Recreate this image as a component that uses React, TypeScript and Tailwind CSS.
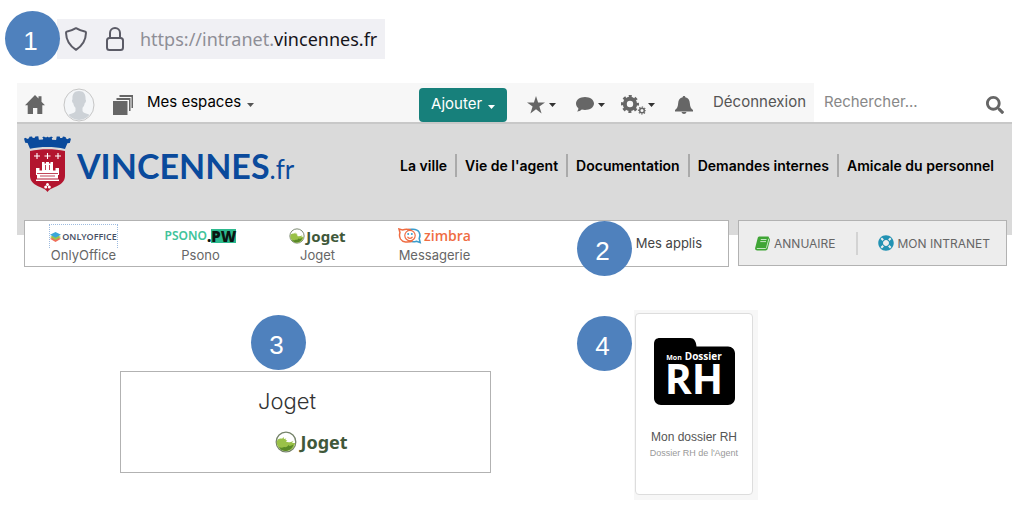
import React from "react";
import { FaSearch, FaLifeRing } from "react-icons/fa";

const navItems = ["La ville", "Vie de l'agent", "Documentation", "Demandes internes", "Amicale du personnel"];

function Step({ n, className = "" }: { n: number; className?: string }) {
  return (
    <span
      className={`flex size-[55px] shrink-0 items-center justify-center rounded-full bg-[#4f81bd] pr-1 pt-1 font-['Liberation_Sans',sans-serif] text-[26px] leading-none text-white ${className}`}
    >
      {n}
    </span>
  );
}

function Caret({ className = "" }: { className?: string }) {
  return (
    <svg width="7" height="4" viewBox="0 0 7 4" fill="currentColor" className={className} aria-hidden="true">
      <path d="M0 0h7L3.500 4z" />
    </svg>
  );
}

function ShieldIcon() {
  return (
    <svg width="22" height="24" viewBox="0 0 22 24" fill="none" stroke="#5b5b66" strokeWidth="2" strokeLinejoin="round" aria-hidden="true">
      <path d="M11 1.200C8 3 5 4 2.200 4.400 1.400 4.600 1 5 1 5.800c.2 8 3.600 13 10 17 6.400-4 9.800-9 10-17 0-.8-.4-1.200-1.200-1.400C17 4 14 3 11 1.200z" />
    </svg>
  );
}

function LockIcon() {
  return (
    <svg width="18" height="24" viewBox="0 0 18 24" fill="none" stroke="#5b5b66" strokeWidth="2" strokeLinejoin="round" aria-hidden="true">
      <rect x="1" y="11" width="16" height="12" rx="2.500" />
      <path d="M4 11V6a5 5 0 0 1 10 0v5" />
    </svg>
  );
}

function HomeIcon() {
  return (
    <svg width="20" height="19" viewBox="0 0 20 19" fill="#666" aria-hidden="true">
      <path d="M10 0l3.500 3.600V1.200h3v5.500L20 10.300h-2.700V19h-5v-6H8v6H2.700v-8.700H0z" />
    </svg>
  );
}

function Avatar() {
  return (
    <svg width="32" height="34" viewBox="0 0 32 34" aria-hidden="true">
      <defs>
        <clipPath id="avatar">
          <ellipse cx="16" cy="17" rx="14" ry="15" />
        </clipPath>
      </defs>
      <ellipse cx="16" cy="17" rx="15" ry="16" fill="#f4f6f8" stroke="#c6c6c6" />
      <path
        clipPath="url(#avatar)"
        fill="#cdd2d7"
        d="M16 3c-5 0-7 3.500-6.500 8.500-.8 0-.7 3 .8 3.700.3 2.200 1.200 3.500 2.200 4.600V23C11.500 26 5 25.500 3 29v5h26v-5c-2-3.500-8.500-3-9.500-6v-3.200c1-1.100 1.900-2.400 2.200-4.600 1.500-.7 1.600-3.700.8-3.700C23 6.500 21 3 16 3z"
      />
    </svg>
  );
}

function StackIcon() {
  return (
    <svg width="20" height="20" viewBox="0 0 20 20" fill="#666" aria-hidden="true">
      <path d="M6.500 0H20v13h-1.500V2H6.500z" />
      <path d="M3.500 3h14v13H16V5H3.500z" />
      <path d="M0 6h14.500v14H0z" />
    </svg>
  );
}

function StarIcon() {
  return (
    <svg width="18" height="18" viewBox="0 0 18 18" fill="#666" aria-hidden="true">
      <path d="M9 0l2.100 6.600H18l-5.600 4 2.200 6.900L9 13.300l-5.600 4.200 2.200-6.900L0 6.600h6.900z" />
    </svg>
  );
}

function CommentIcon() {
  return (
    <svg width="18" height="15" viewBox="0 0 18 15" fill="#666" aria-hidden="true">
      <path d="M9 0c5 0 9 2.800 9 6.500S14 13 9 13c-1.200 0-2.200-.1-3.200-.4C4.500 13.800 3 14.600 1 14.600c1-.9 1.400-2 1.300-3.500C.8 10 0 8.400 0 6.500 0 2.800 4 0 9 0z" />
    </svg>
  );
}

function GearsIcon() {
  return (
    <svg width="25" height="20" viewBox="0 0 25 20" fill="none" stroke="#666" aria-hidden="true">
      <circle cx="9" cy="9" r="5.200" strokeWidth="4" />
      <circle cx="9" cy="9" r="7.800" strokeWidth="2.400" strokeDasharray="3.060 3.066" strokeDashoffset="1.500" />
      <circle cx="21" cy="15.500" r="2.300" strokeWidth="1.500" />
      <circle cx="21" cy="15.500" r="3.500" strokeWidth="1.200" strokeDasharray="1.370 1.378" strokeDashoffset=".7" />
    </svg>
  );
}

function BellIcon() {
  return (
    <svg width="18" height="18" viewBox="0 0 18 18" fill="#666" aria-hidden="true">
      <path d="M9 0c.9 0 1.300.5 1.300 1.300 3 .6 4.300 2.800 4.500 5.700.2 3.500 1 5.500 3.200 7v1.500H0V14c2.200-1.500 3-3.500 3.200-7 .2-2.900 1.500-5.100 4.500-5.700C7.700.5 8.100 0 9 0z" />
      <path d="M6.500 16h5c-.3 1.300-1.300 2-2.500 2s-2.200-.7-2.500-2z" />
    </svg>
  );
}

function Crest() {
  return (
    <svg width="47" height="56" viewBox="0 0 47 56" aria-hidden="true">
      <path
        fill="#0a4a9c"
        d="M0 2.500l2-.8 1 1.300 2-.8.4-1.400 2.600-.4.8 1.500 2-.2.500-1.300 3-.2.600 3.600 4-.2.300-1.600L18 1.200 20 .5l1 .8h1.800l.7-.9.700.9H26l1-.8 2 .7-1.200 1 .3 1.600 4 .2.600-3.600 3 .2.500 1.300 2 .2.800-1.500 2.600.4.400 1.400 2 .8 1-1.300 2 .8-1.200 4.300-2.400.300-2.400 5.600C30 10.300 17 10.300 6 12.700L3.600 7.100l-2.400-.3z"
      />
      <path fill="#b3152f" d="M6 15c11-2.300 24-2.300 35 0v25c0 6-5 9-10 11-4 1.500-6 3-7.500 5-1.500-2-3.500-3.500-7.500-5-5-2-10-5-10-11z" />
      <path stroke="#fff" strokeWidth="1.100" d="M10 20h6M13 17v6M20.500 20h6M23.500 17v6M31 20h6M34 17v6" />
      <path
        fill="#fff"
        d="M18 26h2.500v1.500h1.500V26h3v1.500h1.500V26H29v8.500h2.500V32H35v7h-1v3.500H13V39h-1v-7h3.500v2.500H18z"
      />
      <path stroke="#b3152f" strokeWidth=".8" fill="none" d="M13 37.500h21M16 40h15M21.500 29v5M25.500 29v5" />
      <rect x="12" y="43.500" width="23" height="1.500" fill="#fff" />
      <circle cx="23.500" cy="48.500" r="1.500" fill="#fff" />
      <circle cx="21.700" cy="51" r="1.500" fill="#fff" />
      <circle cx="25.300" cy="51" r="1.500" fill="#fff" />
    </svg>
  );
}

function JogetMark({ large = false }: { large?: boolean }) {
  return (
    <svg className={large ? "size-[22px]" : "size-4"} viewBox="0 0 22 22" aria-hidden="true">
      <circle cx="11" cy="11" r="9.800" fill="#fff" stroke="#75836a" strokeWidth="1.300" />
      <path fill="#9ac148" d="M1.600 11c1-3.500 3.500-4 5.500-3.200L8.500 6l.5 2 2.300-.6-.9 1.700 2 .5-1.500 1c1.500 1.200 4.500 1 7.600-.6l-1.500 2H20c-.4 5-4.200 8-9 8-4.800 0-9-3.500-9.400-9z" />
      <path fill="#5a8a27" d="M9 16c2 .5 4-.5 4.500-2l1 1c1.500 0 2.500-.8 4-1.500-.8 3.600-4 6-7.500 6.500-3 .2-6-1.500-7-4 1.500 1 3.500 1 5 0z" />
    </svg>
  );
}

function JogetLogo({ large = false }: { large?: boolean }) {
  return (
    <span className={`flex items-center font-['Noto_Sans',sans-serif] font-bold leading-none text-[#40583a] ${large ? "gap-[3px] text-[18px]" : "gap-px text-[15px]"}`}>
      <JogetMark large={large} />
      Joget
    </span>
  );
}

function OnlyOfficeLogo() {
  return (
    <span className="flex h-6 items-center gap-px border border-b-0 border-dotted border-[#9dbbe0] font-['Open_Sans',sans-serif] text-[9px] font-semibold leading-none text-[#454e63]">
      <svg width="11" height="12" viewBox="0 0 12 12" aria-hidden="true">
        <path d="M0 8l6-2.600L12 8l-6 3.500z" fill="#f0705a" />
        <path d="M0 6l6-2.600L12 6 6 9.200z" fill="#9bc44c" />
        <path d="M0 3.600L6 .5l6 3.100-6 3.200z" fill="#3ba7d8" />
      </svg>
      ONLYOFFICE
    </span>
  );
}

function PsonoLogo() {
  return (
    <span className="flex items-center font-['Noto_Sans',sans-serif] text-[12px] font-semibold leading-none text-[#40c39a]">
      PSONO
      <span className="text-[15px] font-black leading-[14px] text-[#0b1512]">
        .<span className="inline-block bg-[#2cb98d]">PW</span>
      </span>
    </span>
  );
}

function ZimbraLogo() {
  return (
    <span className="flex items-center gap-[2px] font-['Open_Sans',sans-serif] text-[14px] font-semibold leading-none text-[#ef6c42]">
      <svg width="24" height="16" viewBox="0 0 24 16" fill="none" strokeWidth="1.500" aria-hidden="true">
        <path d="M9 2.200C11 1 19 .5 21 4c1.500 2.600 1 5 .2 6.500l1 4-3.700-1.300c-2 .8-5 .6-7.500.1" stroke="#3b9ccc" />
        <path d="M14.500 13C10 14.800 4.500 14.500 2.500 11 1.200 8.500 1.300 6.500 2 4.800L1 1l3.500 1c2-.8 6-.8 8.500 0" stroke="#ef6c42" />
        <circle cx="12" cy="7.600" r="5.200" stroke="#ef6c42" strokeWidth="1.200" />
        <path d="M9.500 8.800c.8 2 4.200 2 5 0" stroke="#ef6c42" strokeWidth="1.200" />
        <circle cx="10.200" cy="6" r="1" fill="#3b9ccc" />
        <circle cx="13.800" cy="6" r="1" fill="#3b9ccc" />
      </svg>
      zimbra
    </span>
  );
}

function BookIcon() {
  return (
    <svg width="15" height="15" viewBox="0 0 15 15" aria-hidden="true">
      <path
        fill="#3fa535"
        d="M4.500.5h8.300c.9 0 1.300.6 1.100 1.400l1 .8c.2.300.2.700.1 1.100l-2.300 9c-.3 1-1 1.700-2 1.700H2.200C.7 14.500-.2 13.300.2 11.800L2.700 2C3 1 3.600.5 4.500.5z"
      />
      <path stroke="#d5edd2" fill="none" strokeWidth=".9" d="M5.800 3.500h5.700M5.300 5.600H11M1.800 12.500h8.700c.6 0 .9-.3 1-.8l2.400-9" />
    </svg>
  );
}

function DossierFolder() {
  return (
    <span className="relative flex h-[67px] w-[81px] flex-col items-center pt-3 font-['Open_Sans',sans-serif] font-bold text-white">
      <svg className="absolute inset-0" width="81" height="67" viewBox="0 0 81 67" aria-hidden="true">
        <path d="M6 0h30c4 0 6 3 6.500 8.500H74c4 0 7 3 7 7V60c0 4-3 7-7 7H7c-4 0-7-3-7-7V6c0-4 2-6 6-6z" fill="#000" />
      </svg>
      <span className="relative flex items-baseline gap-[3px] leading-3">
        <span className="text-[7px]">Mon</span>
        <span className="text-[10px]">Dossier</span>
      </span>
      <span className="relative text-[41px] leading-7">RH</span>
    </span>
  );
}

const apps = [
  { name: "OnlyOffice", logo: <OnlyOfficeLogo /> },
  { name: "Psono", logo: <PsonoLogo /> },
  { name: "Joget", logo: <JogetLogo /> },
  { name: "Messagerie", logo: <ZimbraLogo /> },
];

export default function App() {
  return (
    <div className="bg-white pt-[11px] font-['Inter',sans-serif] text-[#555]">
      <div className="flex items-center pl-[5px]">
        <Step n={1} className="relative z-10" />
        <div className="-ml-[3px] flex h-10 items-center gap-[19px] bg-[#f0f0f4] px-2">
          <ShieldIcon />
          <LockIcon />
          <span className="-ml-[3px] font-['Noto_Sans',sans-serif] text-[18px] leading-6 text-[#8e8e96]">
            https://intranet.<span className="text-[#15141a]">vincennes.fr</span>
          </span>
        </div>
      </div>

      <div className="mt-[17px] pl-[17px] pr-[7px]">
        <header className="bg-[#dadada] pb-[28px]">
          <div className="flex h-[41px] border-b-2 border-[#c8c8c8] bg-[#f7f7f7]">
            <div className="flex items-center gap-[18px] pl-2 pt-1">
              <a href="#accueil" aria-label="Accueil"><HomeIcon /></a>
              <a href="#profil" aria-label="Profil"><Avatar /></a>
              <StackIcon />
              <button className="-ml-1 -mt-1 flex items-center gap-1.5 text-[15px] text-black">
                Mes espaces <Caret className="mt-1 text-[#555]" />
              </button>
            </div>
            <div className="ml-auto flex items-center gap-5 pr-2 pt-1">
              <button className="flex h-[34px] items-center gap-1.5 rounded bg-[#17807b] px-3 text-[15px] text-white">
                Ajouter <Caret className="mt-1" />
              </button>
              <button aria-label="Favoris" className="flex items-center gap-1 text-[#333]">
                <StarIcon /><Caret />
              </button>
              <button aria-label="Messages" className="flex items-center gap-1 text-[#333]">
                <CommentIcon /><Caret />
              </button>
              <button aria-label="Paramètres" className="-ml-1 flex items-center gap-0.5 text-[#333]">
                <GearsIcon /><Caret />
              </button>
              <button aria-label="Notifications"><BellIcon /></button>
              <a href="#deconnexion" className="-mt-1 text-[15px]">Déconnexion</a>
            </div>
            <form className="flex w-[198px] items-center bg-white pl-2.5 pr-2">
              <input type="search" aria-label="Rechercher" placeholder="Rechercher..." className="min-w-0 flex-1 text-[15px] outline-none placeholder:text-[#888]" />
              <button type="button" aria-label="Lancer la recherche" className="pt-1"><FaSearch className="size-[18px] text-[#666]" /></button>
            </form>
          </div>
          <div className="flex h-[83px] items-center justify-between pl-[7px] pr-[18px]">
            <a href="#vincennes" className="flex items-center gap-[6px] pb-[3px] font-['Lato',sans-serif] text-[#0a4a9c]">
              <Crest />
              <span className="pt-1 text-[34px] font-bold leading-none">
                VINCENNES<span className="text-[26px] font-normal">.fr</span>
              </span>
            </a>
            <nav className="flex items-center text-[14px] font-semibold text-black">
              {navItems.map((item, i) => (
                <a key={item} href={`#${i}`} className="border-l-2 border-[#aaa] px-2 leading-[23px] first:border-l-0 last:pr-0">
                  {item}
                </a>
              ))}
            </nav>
          </div>
        </header>

        <div className="-mt-[15px] flex gap-[9px] pl-[7px] pr-[5px]">
          <section className="relative flex h-[47px] flex-1 border border-[#b2b2b2] bg-white">
            {apps.map((app) => (
              <a key={app.name} href={`#${app.name}`} className="flex w-[117px] flex-col items-center pt-[3px] text-[13px] leading-[14px] text-[#666]">
                <span className="flex h-6 items-center">{app.logo}</span>
                {app.name}
              </a>
            ))}
            <Step n={2} className="absolute left-[552px] top-0" />
            <h2 className="ml-auto self-center pr-[26px] text-[13px] text-[#444]">Mes applis</h2>
          </section>
          <nav className="flex h-[46px] w-[269px] items-center justify-center border border-[#b2b2b2] bg-[#ededed] text-[12px] text-[#666]">
            <a href="#annuaire" className="flex items-center gap-1 pr-5 leading-[23px]"><BookIcon />ANNUAIRE</a>
            <a href="#intranet" className="flex items-center gap-1 border-l-2 border-[#d3d3d3] pl-5 leading-[23px]">
              <FaLifeRing className="size-4 text-[#2292b3]" />MON INTRANET
            </a>
          </nav>
        </div>
      </div>

      <main className="mt-[43px] flex items-start pl-[120px]">
        <div className="w-[371px] pt-[5px]">
          <Step n={3} className="ml-[131px]" />
          <section className="mt-px flex h-[102px] flex-col items-center border border-[#b2b2b2] pt-[13px]">
            <h2 className="mr-[37px] text-[22px] font-light leading-8 text-[#333]">Joget</h2>
            <div className="ml-3 mt-3.5"><JogetLogo large /></div>
          </section>
        </div>
        <Step n={4} className="ml-[86px] mt-1.5" />
        <div className="ml-[2px] w-[124px] bg-[#f7f7f7] pb-[5px] pl-px pr-[5px] pt-[3px]">
          <a href="#dossier" className="flex h-[182px] flex-col items-center rounded border border-[#ddd] bg-white pt-6 font-['Liberation_Sans',sans-serif]">
            <DossierFolder />
            <span className="mt-6 text-[12px] leading-4 text-[#555]">Mon dossier RH</span>
            <span className="text-[9px] leading-4 text-[#999]">Dossier RH de l'Agent</span>
          </a>
        </div>
      </main>
    </div>
  );
}
